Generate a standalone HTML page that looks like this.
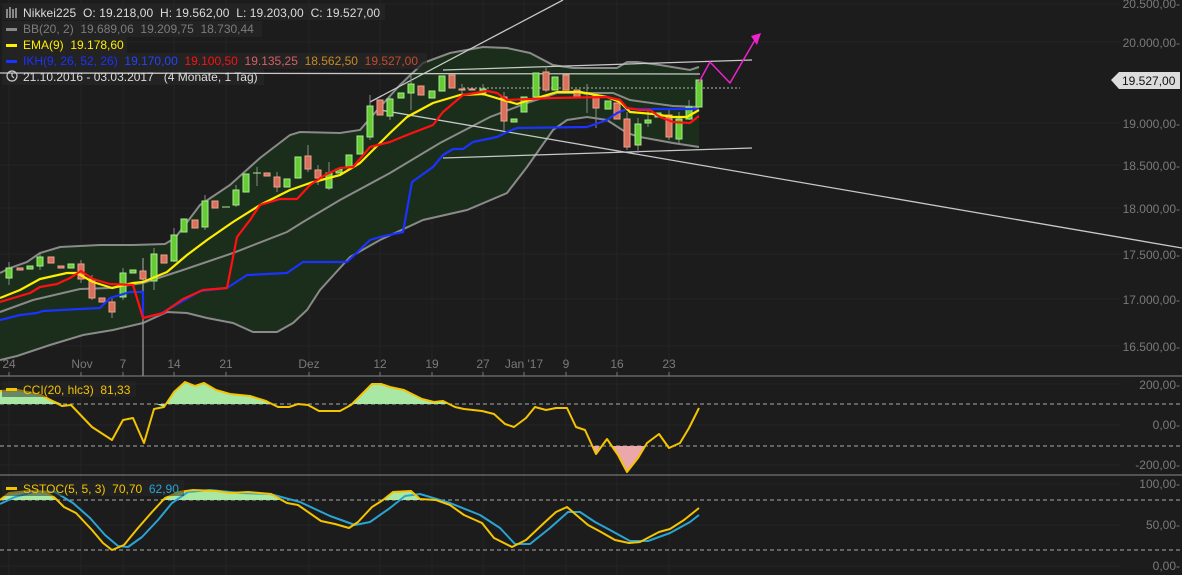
<!DOCTYPE html>
<html><head><meta charset="utf-8"><style>
html,body{margin:0;padding:0;background:#1c1c1c;width:1182px;height:575px;overflow:hidden}
svg{display:block;font-family:"Liberation Sans",sans-serif}
</style></head><body>
<svg width="1182" height="575" viewBox="0 0 1182 575" xmlns="http://www.w3.org/2000/svg">
<rect width="1182" height="575" fill="#1c1c1c"/>
<!-- grid -->
<g stroke="#252525" stroke-width="1">
<line x1="0" y1="4" x2="1120" y2="4"/><line x1="0" y1="42" x2="1120" y2="42"/><line x1="0" y1="123" x2="1120" y2="123"/><line x1="0" y1="165" x2="1120" y2="165"/><line x1="0" y1="208" x2="1120" y2="208"/><line x1="0" y1="254" x2="1120" y2="254"/><line x1="0" y1="299" x2="1120" y2="299"/><line x1="0" y1="346" x2="1120" y2="346"/>
<line x1="0" y1="384" x2="1120" y2="384"/><line x1="0" y1="425" x2="1120" y2="425"/><line x1="0" y1="465" x2="1120" y2="465"/><line x1="0" y1="484" x2="1120" y2="484"/><line x1="0" y1="525" x2="1120" y2="525"/><line x1="0" y1="566" x2="1120" y2="566"/>
<line x1="9" y1="0" x2="9" y2="575"/><line x1="81" y1="0" x2="81" y2="575"/><line x1="123" y1="0" x2="123" y2="575"/><line x1="174" y1="0" x2="174" y2="575"/><line x1="226" y1="0" x2="226" y2="575"/><line x1="309" y1="0" x2="309" y2="575"/><line x1="380" y1="0" x2="380" y2="575"/><line x1="432" y1="0" x2="432" y2="575"/><line x1="483" y1="0" x2="483" y2="575"/><line x1="524" y1="0" x2="524" y2="575"/><line x1="566" y1="0" x2="566" y2="575"/><line x1="617" y1="0" x2="617" y2="575"/><line x1="669" y1="0" x2="669" y2="575"/>
</g>
<!-- BB fill -->
<polygon fill="#1b2e1b" points="0,273 10,268 27,262 40,253 60,247 80,246 100,245 133,245 165,244 175,238 185,225 200,205 230,185 260,158 290,135 300,132 340,133 360,130 380,107 400,85 423,63 450,53 483,47 507,48 530,53 553,65 573,68 617,68 627,62 637,62 660,65 690,70 699,67 699,147 673,143 640,137 627,133 607,120 587,117 567,120 553,130 527,167 507,193 467,210 423,220 380,240 350,257 320,290 307,310 293,323 277,332 253,332 233,323 207,318 187,313 167,312 143,323 113,330 83,335 50,345 17,356 0,360"/>
<g fill="none" stroke="#8a8a8a" stroke-width="2">
<polyline points="0,273 10,268 27,262 40,253 60,247 80,246 100,245 133,245 165,244 175,238 185,225 200,205 230,185 260,158 290,135 300,132 340,133 360,130 380,107 400,85 423,63 450,53 483,47 507,48 530,53 553,65 573,68 617,68 627,62 637,62 660,65 690,70 699,67"/>
<polyline points="0,312 33,300 80,289 110,288 143,283 183,270 233,253 287,232 303,222 340,200 390,173 440,143 490,117 527,103 557,93 613,93 630,100 673,106 699,107"/>
<polyline points="0,360 17,356 50,345 83,335 113,330 143,323 167,312 187,313 207,318 233,323 253,332 277,332 293,323 307,310 320,290 350,257 380,240 423,220 467,210 507,193 527,167 553,130 567,120 587,117 607,120 627,133 640,137 673,143 699,147"/>
</g>
<!-- legend backgrounds -->
<g fill="#262626" opacity="0.7">
<rect x="2" y="4" width="383" height="16"/>
<rect x="2" y="21" width="260" height="16"/>
<rect x="2" y="37" width="125" height="16"/>
<rect x="2" y="53" width="425" height="16"/>
<rect x="2" y="69" width="262" height="16"/>
</g>
<!-- trend lines -->
<g stroke="#c8c8c8" stroke-width="1.3" fill="none">
<line x1="370" y1="102" x2="563" y2="0"/>
<line x1="380" y1="110" x2="1182" y2="248"/>
<line x1="0" y1="73" x2="700" y2="74"/>
<line x1="443" y1="70" x2="752" y2="60"/>
<line x1="443" y1="158" x2="752" y2="148"/>
<line x1="143" y1="258" x2="143" y2="376" stroke="#999"/>
<line x1="463" y1="88" x2="740" y2="88" stroke="#999" stroke-dasharray="2,2"/>
</g>
<!-- candles -->
<g stroke-width="1">
<g stroke="#8a8a8a">
<line x1="9" y1="262" x2="9" y2="285"/><line x1="40" y1="252" x2="40" y2="270"/><line x1="81" y1="260" x2="81" y2="283"/><line x1="92" y1="275" x2="92" y2="300"/><line x1="112" y1="298" x2="112" y2="318"/><line x1="123" y1="268" x2="123" y2="300"/><line x1="143" y1="258" x2="143" y2="285"/><line x1="154" y1="248" x2="154" y2="290"/><line x1="174" y1="228" x2="174" y2="262"/><line x1="205" y1="195" x2="205" y2="230"/><line x1="236" y1="185" x2="236" y2="207"/><line x1="257" y1="167" x2="257" y2="186"/><line x1="277" y1="172" x2="277" y2="192"/><line x1="308" y1="145" x2="308" y2="172"/><line x1="318" y1="165" x2="318" y2="185"/><line x1="329" y1="162" x2="329" y2="190"/><line x1="370" y1="95" x2="370" y2="140"/><line x1="390" y1="95" x2="390" y2="120"/><line x1="411" y1="76" x2="411" y2="110"/><line x1="462" y1="84" x2="462" y2="94"/><line x1="483" y1="84" x2="483" y2="96"/><line x1="504" y1="92" x2="504" y2="130"/><line x1="546" y1="66" x2="546" y2="92"/><line x1="587" y1="84" x2="587" y2="113"/><line x1="596" y1="92" x2="596" y2="128"/><line x1="627" y1="112" x2="627" y2="150"/><line x1="638" y1="118" x2="638" y2="153"/><line x1="648" y1="110" x2="648" y2="127"/><line x1="669" y1="108" x2="669" y2="140"/><line x1="679" y1="112" x2="679" y2="143"/><line x1="689" y1="100" x2="689" y2="120"/>
</g>
<g fill="#66cc33" stroke="#a8e890">
<rect x="6" y="268" width="6" height="10"/><rect x="27" y="266" width="6" height="3"/><rect x="37" y="257" width="6" height="9"/><rect x="68" y="264" width="6" height="4"/><rect x="120" y="273" width="6" height="24"/><rect x="130" y="270" width="6" height="3"/><rect x="151" y="254" width="6" height="27"/><rect x="171" y="235" width="6" height="26"/><rect x="181" y="219" width="6" height="13"/><rect x="202" y="201" width="6" height="26"/><rect x="233" y="190" width="6" height="15"/><rect x="243" y="174" width="6" height="18"/><rect x="284" y="179" width="6" height="8"/><rect x="295" y="157" width="6" height="21"/><rect x="326" y="173" width="6" height="15"/><rect x="336" y="169" width="6" height="4"/><rect x="346" y="155" width="6" height="13"/><rect x="357" y="136" width="6" height="18"/><rect x="367" y="106" width="6" height="31"/><rect x="387" y="99" width="6" height="17"/><rect x="398" y="93" width="6" height="5"/><rect x="408" y="84" width="6" height="9"/><rect x="429" y="91" width="6" height="7"/><rect x="439" y="76" width="6" height="15"/><rect x="480" y="89" width="6" height="4"/><rect x="511" y="119" width="6" height="3"/><rect x="521" y="97" width="6" height="15"/><rect x="533" y="73" width="6" height="24"/><rect x="552" y="77" width="6" height="13"/><rect x="605" y="101" width="6" height="8"/><rect x="635" y="124" width="6" height="21"/><rect x="645" y="120" width="6" height="3"/><rect x="655" y="113" width="6" height="4"/><rect x="676" y="119" width="6" height="20"/><rect x="686" y="107" width="6" height="12"/><rect x="696" y="80" width="6" height="27"/>
</g>
<g fill="#d9705c" stroke="#f0a090">
<rect x="17" y="268" width="6" height="2"/><rect x="48" y="257" width="6" height="6"/><rect x="58" y="266" width="6" height="2"/><rect x="78" y="264" width="6" height="15"/><rect x="89" y="279" width="6" height="19"/><rect x="99" y="298" width="6" height="4"/><rect x="109" y="302" width="6" height="10"/><rect x="140" y="271" width="6" height="8"/><rect x="161" y="255" width="6" height="8"/><rect x="192" y="220" width="6" height="8"/><rect x="212" y="201" width="6" height="7"/><rect x="264" y="173" width="6" height="3"/><rect x="274" y="177" width="6" height="10"/><rect x="305" y="156" width="6" height="13"/><rect x="315" y="170" width="6" height="8"/><rect x="377" y="100" width="6" height="15"/><rect x="418" y="86" width="6" height="9"/><rect x="449" y="75" width="6" height="13"/><rect x="459" y="89" width="6" height="1"/><rect x="469" y="89" width="6" height="1"/><rect x="501" y="97" width="6" height="24"/><rect x="543" y="72" width="6" height="18"/><rect x="563" y="75" width="6" height="15"/><rect x="574" y="90" width="6" height="7"/><rect x="584" y="93" width="6" height="1"/><rect x="593" y="96" width="6" height="12"/><rect x="614" y="103" width="6" height="16"/><rect x="624" y="119" width="6" height="28"/><rect x="666" y="115" width="6" height="22"/>
</g>
<g stroke="#a8e890"><line x1="222" y1="207" x2="230" y2="207"/><line x1="253" y1="173" x2="261" y2="173"/></g>
</g>
<!-- MAs -->
<g fill="none" stroke-width="2.2" stroke-linejoin="round">
<polyline stroke="#1a33ff" points="0,320 20,315 37,313 43,311 80,309 100,308 110,298 130,292 143,292 143,318 160,314 200,291 227,288 247,275 287,273 303,262 347,262 370,240 380,237 403,232 412,182 433,167 443,155 453,149 463,149 473,142 497,137 507,132 517,128 587,127 607,120 617,113 627,109 699,109"/>
<polyline stroke="#ffee00" points="0,298 20,290 40,279 67,273 77,273 93,282 112,288 133,283 143,282 167,272 187,255 207,240 233,222 260,205 290,190 310,183 340,175 360,163 390,133 407,117 433,103 460,95 483,94 503,100 517,104 530,100 557,92 580,92 607,97 620,102 630,112 653,114 673,117 687,117 699,110"/>
<polyline stroke="#ff1111" points="0,302 30,293 40,287 57,284 70,278 81,271 93,279 110,284 133,285 143,318 163,313 183,299 203,290 227,288 237,237 250,220 260,205 280,199 297,199 310,185 325,175 340,168 353,167 370,147 390,142 407,135 433,125 443,112 463,95 487,91 497,93 507,100 553,98 607,97 620,100 627,108 640,110 650,110 660,117 673,122 690,123 699,116"/>
<polyline stroke="#ee22cc" stroke-width="1.5" points="699,82 710,62 730,83 755,40"/>
</g>
<polygon points="751,36 761,33 757,45" fill="#ee22cc"/>
<!-- legend -->
<g font-size="12">
<g stroke="#ccc" stroke-width="1.2" fill="none"><line x1="7" y1="9" x2="7" y2="18"/><line x1="10" y1="7" x2="10" y2="18"/><line x1="13" y1="9" x2="13" y2="18"/><line x1="16" y1="8" x2="16" y2="18"/><circle cx="12" cy="76" r="5"/><polyline points="12,73 12,76 14,78"/></g>
<rect x="6" y="28" width="11" height="3" fill="#888"/>
<rect x="6" y="44" width="11" height="3" fill="#ffee00"/>
<rect x="6" y="60" width="11" height="3" fill="#1a33ff"/>
<text x="23" y="17" fill="#dcdcdc" textLength="357">Nikkei225 &#160;O: 19.218,00 &#160;H: 19.562,00 &#160;L: 19.203,00 &#160;C: 19.527,00</text>
<text x="23" y="33" fill="#7c7c7c">BB(20, 2) &#160;19.689,06 &#160;19.209,75 &#160;18.730,44</text>
<text x="23" y="49" fill="#ffee00">EMA(9) &#160;19.178,60</text>
<text x="23" y="65" fill="#1a33ff">IKH(9, 26, 52, 26) &#160;<tspan fill="#2244ff">19.170,00</tspan> &#160;<tspan fill="#ff1111">19.100,50</tspan> &#160;<tspan fill="#d86060">19.135,25</tspan> &#160;<tspan fill="#c88a20">18.562,50</tspan> &#160;<tspan fill="#c84a2a">19.527,00</tspan></text>
<text x="23" y="81" fill="#dcdcdc">21.10.2016 - 03.03.2017 &#160;&#160;(4 Monate, 1 Tag)</text>
</g>
<!-- price axis -->
<g font-size="12" fill="#7a7a7a" text-anchor="end">
<text x="1180" y="8">20.500,00-</text><text x="1180" y="47">20.000,00-</text><text x="1180" y="128">19.000,00-</text><text x="1180" y="170">18.500,00-</text><text x="1180" y="213">18.000,00-</text><text x="1180" y="259">17.500,00-</text><text x="1180" y="304">17.000,00-</text><text x="1180" y="351">16.500,00-</text>
<text x="1180" y="389">200,00-</text><text x="1180" y="429">0,00-</text><text x="1180" y="469">-200,00-</text>
<text x="1180" y="488">100,00-</text><text x="1180" y="529">50,00-</text><text x="1180" y="570">0,00-</text>
</g>
<polygon points="1111,80 1119,72 1180,72 1180,89 1119,89" fill="#dcdcdc"/>
<text x="1122" y="85" font-size="12" fill="#111">19.527,00</text>
<!-- date axis -->
<g font-size="12" fill="#7a7a7a" text-anchor="middle">
<text x="9" y="368">24</text><text x="82" y="368">Nov</text><text x="123" y="368">7</text><text x="174" y="368">14</text><text x="226" y="368">21</text><text x="309" y="368">Dez</text><text x="380" y="368">12</text><text x="432" y="368">19</text><text x="483" y="368">27</text><text x="524" y="368">Jan '17</text><text x="566" y="368">9</text><text x="617" y="368">16</text><text x="669" y="368">23</text>
</g>
<g stroke="#888"><line x1="0" y1="376" x2="1182" y2="376"/><line x1="0" y1="475" x2="1182" y2="475"/></g>
<g stroke="#777" stroke-width="1">
<line x1="9" y1="372" x2="9" y2="376"/><line x1="81" y1="372" x2="81" y2="376"/><line x1="123" y1="372" x2="123" y2="376"/><line x1="174" y1="372" x2="174" y2="376"/><line x1="226" y1="372" x2="226" y2="376"/><line x1="309" y1="372" x2="309" y2="376"/><line x1="380" y1="372" x2="380" y2="376"/><line x1="432" y1="372" x2="432" y2="376"/><line x1="483" y1="372" x2="483" y2="376"/><line x1="524" y1="372" x2="524" y2="376"/><line x1="566" y1="372" x2="566" y2="376"/><line x1="617" y1="372" x2="617" y2="376"/><line x1="669" y1="372" x2="669" y2="376"/>
</g>
<!-- CCI -->
<g stroke="#aaa" stroke-dasharray="4,3" stroke-width="1"><line x1="0" y1="404" x2="1182" y2="404"/><line x1="0" y1="446" x2="1182" y2="446"/><line x1="0" y1="500" x2="1182" y2="500"/><line x1="0" y1="550" x2="1182" y2="550"/></g>
<polygon fill="#a9e8a4" points="0,404 0,391 18,390 41,395 62,404"/>
<polygon fill="#a9e8a4" points="156,404 164,407 174,392 185,382 195,386 204,383 216,390 230,394 250,396 266,401 272,404"/>
<polygon fill="#a9e8a4" points="348,404 351,405 363,393 372,384 381,384 390,387 404,390 422,399 434,402 443,401 448,404"/>
<polygon fill="#eaa8aa" points="593,446 596,454 600,446"/>
<polygon fill="#eaa8aa" points="611,446 618,455 627,472 638,458 645,446"/>
<polyline fill="none" stroke="#f5c400" stroke-width="2" stroke-linejoin="round" points="0,391 18,390 41,395 62,406 71,405 92,427 112,440 123,420 133,418 144,443 154,409 164,407 174,392 185,382 195,386 204,383 216,390 230,394 250,396 266,401 278,407 289,407 298,404 308,405 319,411 340,411 351,405 363,393 372,384 381,384 390,387 404,390 422,399 434,402 443,401 455,407 464,409 482,411 494,414 505,424 514,427 526,418 535,407 546,410 556,408 567,408 576,427 585,430 596,454 607,439 618,455 627,472 638,458 647,443 659,434 669,448 680,443 689,428 699,408"/>
<rect x="2" y="381" width="134" height="16" fill="#262626" opacity="0.5"/>
<rect x="6" y="388" width="11" height="3" fill="#f5c400"/>
<text x="23" y="394" font-size="12" fill="#f5c400">CCI(20, hlc3) &#160;81,33</text>
<!-- SSTOC -->
<polygon fill="#a9e8a4" points="0,500 9,493 28,491 46,492 55,498 57,500"/>
<polygon fill="#a9e8a4" points="160,500 165,498 179,492 193,490 216,491 230,493 248,492 271,494 282,500"/>
<polygon fill="#a9e8a4" points="383,500 393,492 411,491 420,499 422,500"/>
<polyline fill="none" stroke="#2aa4d4" stroke-width="2" stroke-linejoin="round" points="0,504 15,497 37,491 55,492 73,503 90,518 105,535 118,546 128,547 142,537 158,520 172,503 188,492 210,490 240,493 270,494 300,502 330,516 355,525 370,522 390,508 405,496 420,494 450,503 480,515 500,528 515,544 530,544 550,528 568,512 580,512 595,522 610,530 630,541 648,541 670,533 690,522 699,515"/>
<polyline fill="none" stroke="#f5c400" stroke-width="2" stroke-linejoin="round" points="0,500 9,493 28,491 46,492 55,498 64,507 76,513 92,530 103,543 112,550 124,545 138,528 152,512 165,498 179,492 193,490 216,491 230,493 248,492 271,494 287,503 298,505 321,521 335,524 349,528 358,522 372,507 383,500 393,492 411,491 420,499 436,500 450,505 464,515 482,523 494,538 512,547 526,540 544,523 556,512 567,507 574,513 588,525 601,532 615,540 629,543 640,542 659,532 670,529 684,520 699,508"/>
<rect x="2" y="480" width="182" height="16" fill="#262626" opacity="0.5"/>
<rect x="6" y="487" width="11" height="3" fill="#f5c400"/>
<text x="23" y="493" font-size="12" fill="#f5c400">SSTOC(5, 5, 3) &#160;70,70 &#160;<tspan fill="#2aa4d4">62,90</tspan></text>
</svg>
</body></html>
